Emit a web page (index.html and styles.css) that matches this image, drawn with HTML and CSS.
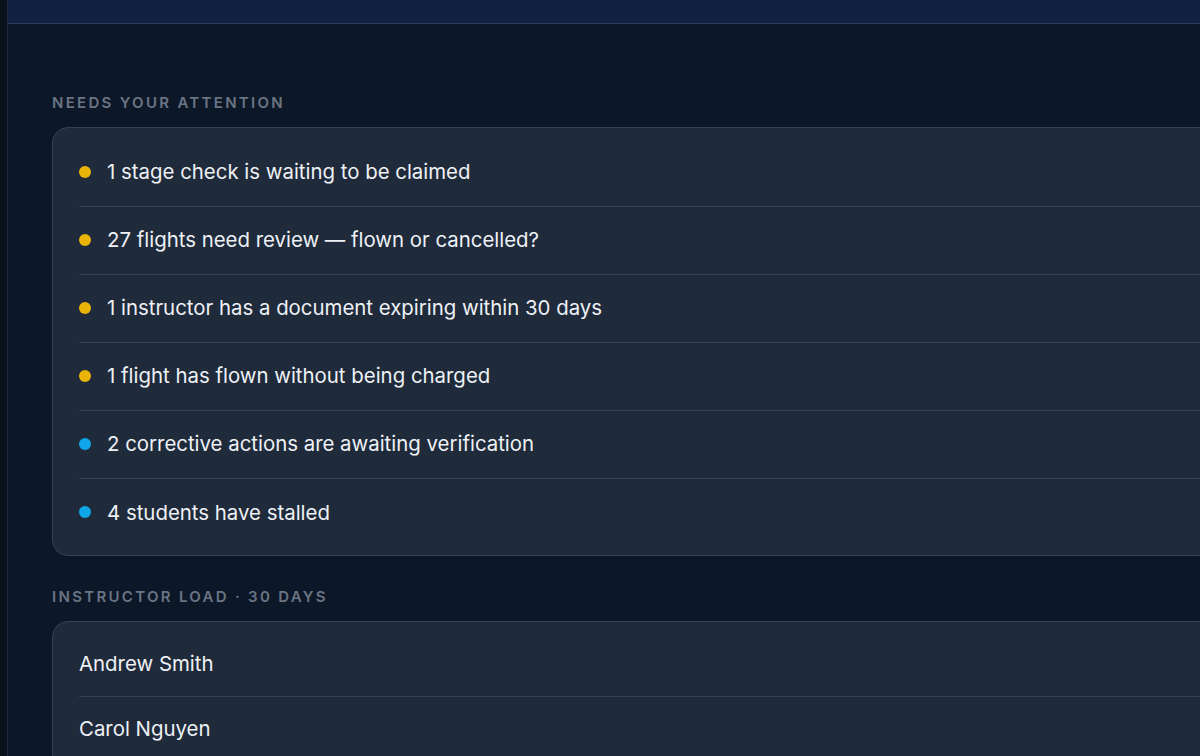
FILE: index.html
```html
<!DOCTYPE html>
<html>
<head>
<meta charset="utf-8">
<link rel="stylesheet" href="styles.css">
</head>
<body>
<div class="app">
  <aside class="rail"></aside>
  <main class="main">
    <header class="topbar"></header>
    <div class="content">
      <section class="section first">
        <h2 class="label">Needs your attention</h2>
        <ul class="card alerts">
          <li class="row"><span class="dot warn"></span>1 stage check is waiting to be claimed</li>
          <li class="row"><span class="dot warn"></span>27 flights need review — flown or cancelled?</li>
          <li class="row"><span class="dot warn"></span>1 instructor has a document expiring within 30 days</li>
          <li class="row"><span class="dot warn"></span>1 flight has flown without being charged</li>
          <li class="row"><span class="dot info"></span>2 corrective actions are awaiting verification</li>
          <li class="row"><span class="dot info"></span>4 students have stalled</li>
        </ul>
      </section>
      <section class="section">
        <h2 class="label">Instructor load · 30 days</h2>
        <ul class="card load">
          <li class="row">Andrew Smith</li>
          <li class="row">Carol Nguyen</li>
        </ul>
      </section>
    </div>
  </main>
</div>
</body>
</html>
```

FILE: styles.css
```css
* { box-sizing: border-box; }
html, body {
  margin: 0;
  padding: 0;
  height: 756px;
  overflow: hidden;
  background: #0c1828;
  font-family: Inter, "Noto Sans", sans-serif;
}
.app {
  display: flex;
  height: 756px;
}
.rail {
  width: 8px;
  flex: none;
  background: #09111d;
  border-right: 1px solid #1d2a40;
}
.main {
  flex: 1;
  min-width: 0;
  overflow: hidden;
  background: #0c1828;
}
.topbar {
  height: 24px;
  background: #101f42;
  border-bottom: 1px solid #2c3d5e;
}
.content {
  padding: 70px 0 0 44px;
}
.section {
  width: 1300px;
}
.section + .section {
  margin-top: 32px;
}
.label {
  margin: 0 0 15px 0;
  font-size: 15px;
  font-weight: 600;
  line-height: 18px;
  letter-spacing: 2.3px;
  text-transform: uppercase;
  color: #6b7483;
}
.card {
  list-style: none;
  margin: 0;
  padding: 11px 0 8px 26px;
  background: #1f2a3b;
  border: 1px solid #354155;
  border-radius: 16px;
}
.row {
  display: flex;
  align-items: center;
  height: 68px;
  padding-bottom: 2px;
  font-size: 20.4px;
  color: #eef1f5;
  border-bottom: 1px solid #354155;
}
.row:last-child {
  border-bottom: none;
}
.load .row {
  height: 64px;
}
.dot {
  width: 12px;
  height: 12px;
  border-radius: 50%;
  margin-right: 16px;
  flex: none;
}
.dot.warn { background: #eab308; }
.dot.info { background: #0ea5e9; }
```
